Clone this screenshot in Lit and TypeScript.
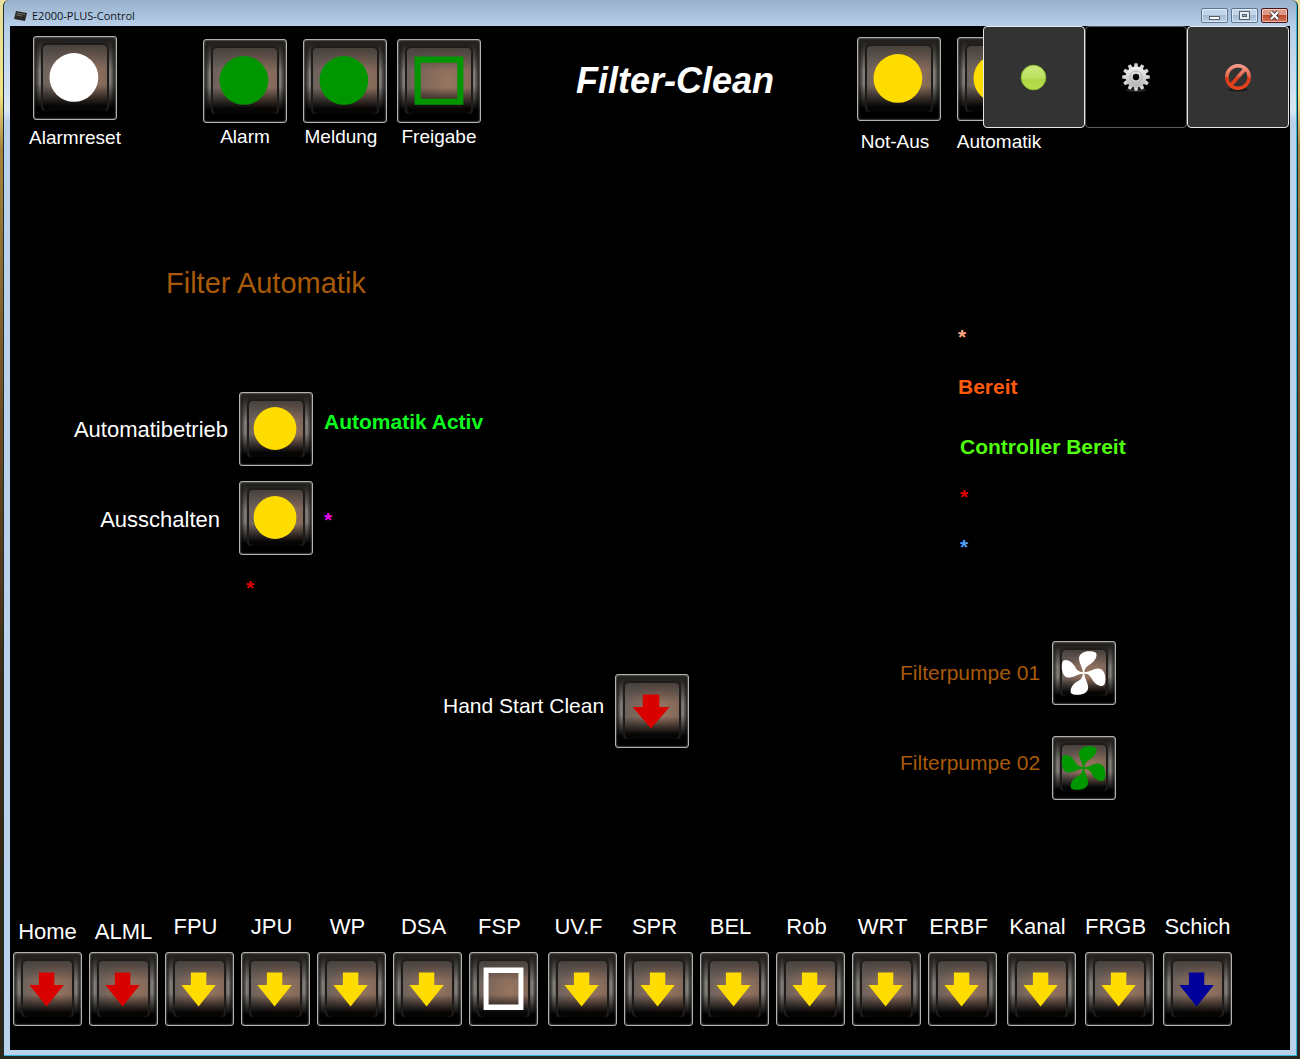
import { LitElement, html, css, svg } from "lit";
import { customElement, property } from "lit/decorators.js";

type Glyph = "circle" | "square" | "arrow" | "fan";
type Tone = "white" | "green" | "yellow" | "red" | "blue";

interface TileSpec {
  id: string;
  label: string;
  glyph: Glyph;
  tone: Tone;
}

const BLADE =
  "M-1 -1C-1 -6 -5 -11 -5.500 -17C-5.500 -23 0 -26 7 -26C12 -26 15.500 -25 15.500 -22C15.500 -17 12 -13 8 -10.500C3 -8 1 -5 1 -1Z";

const glyphs = {
  circle: svg`<circle cx="36" cy="36.5" r="22" />`,
  square: svg`<path fill-rule="evenodd" d="M15 15H59V58.500H15ZM20.500 20.500V53H53.500V20.500Z" />`,
  arrow: svg`<path d="M27.500 20H44.500V33H55L36 55L17 33H27.500Z" />`,
  fan: svg`<g transform="translate(36.500 37)">
    ${[0, 90, 180, 270].map((a) => svg`<path d=${BLADE} transform="rotate(${a})" />`)}
    <circle r="1.500" />
  </g>`,
};

/** Face of a bevelled push button with a coloured glyph. */
@customElement("tile-face")
class TileFace extends LitElement {
  @property() glyph: Glyph = "circle";
  @property() tone: Tone = "white";

  static styles = css`
    :host {
      display: block;
      height: 100%;
    }
    .face {
      box-sizing: border-box;
      height: 100%;
      padding: 6px 7px;
      border: 1px solid #b4b2ad;
      border-radius: 3px;
      display: grid;
      position: relative;
      box-shadow: inset 0 0 2px #b4b2ad;
      background:
        linear-gradient(to bottom, #23211f 4%, rgba(24, 22, 20, 0.8) 9%, transparent 40%, transparent 56%, #000 86%),
        linear-gradient(to right, #2e2c2a 2%, #85817b 7%, #5d5955 12%, #5d5955 88%, #85817b 93%, #2e2c2a 98%);
    }
    .plate {
      border: 2px solid #1f1c1a;
      border-bottom-color: transparent;
      border-radius: 6px;
      background:
        linear-gradient(to bottom, rgba(44, 41, 38, 0.6), transparent 34%, transparent 60%, rgba(0, 0, 0, 0.95) 92%),
        radial-gradient(circle at 64% 52%, #98765f, #84695a 40%, #6e635d 74%, #6b6662);
      background-clip: padding-box;
    }
    svg {
      position: absolute;
      inset: 0;
      width: 100%;
      height: 100%;
    }
    .white { fill: #ffffff; }
    .green { fill: #009600; }
    .yellow { fill: #ffdc00; }
    .red { fill: #d90000; }
    .blue { fill: #00009b; }
  `;

  render() {
    return html`<div class="face">
      <div class="plate"></div>
      <svg class=${this.tone} viewBox="0 0 74 74" preserveAspectRatio="none" aria-hidden="true">
        ${glyphs[this.glyph]}
      </svg>
    </div>`;
  }
}

const NAV: TileSpec[][] = [
  [
    { id: "home", label: "Home", glyph: "arrow", tone: "red" },
    { id: "alml", label: "ALML", glyph: "arrow", tone: "red" },
    { id: "fpu", label: "FPU", glyph: "arrow", tone: "yellow" },
    { id: "jpu", label: "JPU", glyph: "arrow", tone: "yellow" },
    { id: "wp", label: "WP", glyph: "arrow", tone: "yellow" },
    { id: "dsa", label: "DSA", glyph: "arrow", tone: "yellow" },
    { id: "fsp", label: "FSP", glyph: "square", tone: "white" },
  ],
  [
    { id: "uvf", label: "UV.F", glyph: "arrow", tone: "yellow" },
    { id: "spr", label: "SPR", glyph: "arrow", tone: "yellow" },
    { id: "bel", label: "BEL", glyph: "arrow", tone: "yellow" },
    { id: "rob", label: "Rob", glyph: "arrow", tone: "yellow" },
    { id: "wrt", label: "WRT", glyph: "arrow", tone: "yellow" },
    { id: "erbf", label: "ERBF", glyph: "arrow", tone: "yellow" },
  ],
  [
    { id: "kanal", label: "Kanal", glyph: "arrow", tone: "yellow" },
    { id: "frgb", label: "FRGB", glyph: "arrow", tone: "yellow" },
    { id: "schich", label: "Schich", glyph: "arrow", tone: "blue" },
  ],
];

@customElement("app-root")
class AppRoot extends LitElement {
  static styles = css`
    :host {
      display: block;
      font-family: "Liberation Sans", Arial, sans-serif;
      color: #fff;
    }
    * { box-sizing: border-box; }
    h1, h2, p { margin: 0; font-weight: normal; }
    button {
      display: block;
      margin: 0;
      padding: 0;
      border: 0;
      background: none;
      color: inherit;
      font: inherit;
      cursor: pointer;
    }
    label, p { white-space: nowrap; }

    .desktop {
      min-height: 100vh;
      display: flex;
      padding: 0 2px 2px 3px;
      background: linear-gradient(to bottom, #e8dfa0, #f3e283 9%, #a8843c 14%, #6b4a20 40%, #3d2a14 65%, #2c2416);
    }
    .window {
      flex: 1;
      display: flex;
      flex-direction: column;
      padding: 0 7px 6px 6px;
      border: 1px solid #1d2b33;
      border-top: 0;
      border-radius: 6px 6px 0 0;
      box-shadow: inset -1px -1px 0 #35b5d4;
      background: linear-gradient(to bottom, #98b1cc, #b7cfe9 26px, #dbe7f3 110px, #b9d1ea 122px);
    }

    .titlebar {
      height: 26px;
      display: flex;
      align-items: center;
      gap: 5px;
      padding: 5px 2px 0 4px;
      font: 11px/16px "Open Sans", "Noto Sans", sans-serif;
      color: #10141a;
    }
    .app-icon { width: 13px; height: 12px; }
    .caption { flex: 1; }
    .win-buttons { display: flex; gap: 3px; }
    .win-button {
      width: 27px;
      height: 15px;
      border: 1px solid #5f7690;
      border-radius: 2px;
      background: linear-gradient(to bottom, #c3d5e8 45%, #a3bbd4 50%, #bcd2e8);
      box-shadow: inset 0 0 0 1px rgba(255, 255, 255, 0.5);
    }
    .win-button.close {
      border-color: #4c1512;
      background: linear-gradient(to bottom, #dd9a88 45%, #bf4a30 50%, #d4745a);
    }
    .win-button svg { display: block; width: 25px; height: 13px; }

    .screen {
      flex: 1;
      display: flex;
      flex-direction: column;
      position: relative;
      background: #000;
    }

    .tile { display: block; flex: none; width: 84px; height: 84px; }
    .tile.medium { width: 74px; height: 74px; }
    .tile.small { width: 64px; height: 64px; }
    .tile.narrow { width: 69px; height: 74px; }

    .header {
      display: flex;
      align-items: flex-start;
      padding: 10px 249px 0 23px;
      font-size: 19px;
      line-height: 24px;
    }
    .item {
      width: 84px;
      display: flex;
      flex-direction: column;
      align-items: center;
      gap: 6px;
    }
    .lamps {
      display: flex;
      gap: 10px;
      padding-top: 3px;
      margin-left: 86px;
    }
    .lamps .item { gap: 2px; }
    .pair { display: flex; gap: 16px; }
    .modes { padding-top: 1px; }
    .modes .item { gap: 9px; }
    .title {
      flex: 1;
      padding: 25px 0 0 12px;
      text-align: center;
      font: italic bold 36px/40px "Liberation Sans", Arial, sans-serif;
      white-space: nowrap;
    }

    .toolbar {
      position: absolute;
      top: 0;
      right: 1px;
      display: flex;
    }
    .tool {
      width: 102px;
      height: 102px;
      display: grid;
      place-items: center;
      border: 1px solid #e6e6e6;
      border-radius: 4px;
      background: #333;
    }
    .tool.active { border-color: #5c5c5c; background: #000; }
    .tool svg { width: 32px; height: 32px; }

    .main {
      flex: 1;
      display: grid;
      grid-template-columns: minmax(0, 433fr) minmax(0, 448fr) minmax(0, 399fr);
      font-size: 21px;
      line-height: 24px;
    }
    .heading {
      padding: 113px 0 0 156px;
      font-size: 29px;
      line-height: 32px;
      color: #a85a08;
      white-space: nowrap;
    }
    .controls { display: flex; gap: 11px; padding-top: 93px; }
    .names {
      flex: none;
      width: 218px;
      display: flex;
      flex-direction: column;
      align-items: flex-end;
      gap: 66px;
      padding-top: 26px;
      font-size: 22px;
    }
    .indent { padding-right: 8px; }
    .switches { display: flex; flex-direction: column; gap: 15px; }
    .states {
      display: flex;
      flex-direction: column;
      gap: 74px;
      padding-top: 18px;
    }
    .note { padding: 6px 0 0 7px; }

    .status { font-weight: bold; }
    .lime { color: #0cff1c; }
    .magenta { color: #f000f0; }
    .crimson { color: #e00000; }
    .peach { color: #ffa880; }
    .orange { color: #ff5a0c; }
    .leaf { color: #50ff0c; }
    .sky { color: #50a0ff; }

    .hand {
      display: flex;
      align-items: flex-start;
      gap: 11px;
      padding-top: 520px;
    }
    .hand label { padding-top: 20px; }

    .messages {
      display: flex;
      flex-direction: column;
      gap: 36px;
      padding: 171px 0 0 67px;
    }
    .group { display: flex; flex-direction: column; gap: 26px; }
    .group.wide { padding-left: 2px; }
    .pumps {
      display: flex;
      gap: 12px;
      padding: 82px 0 0 9px;
      color: #a85a08;
    }
    .pump-names { display: flex; flex-direction: column; gap: 66px; padding-top: 20px; }
    .pump-tiles { display: flex; flex-direction: column; gap: 31px; }

    .nav {
      display: flex;
      gap: 10px;
      padding: 0 0 24px 3px;
      font-size: 22px;
      line-height: 24px;
    }
    .nav-group { display: flex; align-items: flex-end; gap: 7px; }
    .nav-group:last-child { gap: 9px; }
    .nav-item {
      width: 69px;
      display: flex;
      flex-direction: column;
      align-items: center;
      gap: 13px;
    }
    .nav-item label { padding-right: 8px; }
    .nav-item.red { gap: 8px; }
    .nav-item.red label, .nav-item.blue label { padding-right: 0; }
  `;

  private tile(id: string, glyph: Glyph, tone: Tone, size = "") {
    return html`<button class="tile ${size}" id=${id} type="button">
      <tile-face .glyph=${glyph} .tone=${tone}></tile-face>
    </button>`;
  }

  private item(id: string, label: string, glyph: Glyph, tone: Tone, labelClass = "") {
    return html`<div class="item">
      ${this.tile(id, glyph, tone)}
      <label class=${labelClass} for=${id}>${label}</label>
    </div>`;
  }

  private titlebar() {
    return html`<div class="titlebar">
      <svg class="app-icon" viewBox="0 0 13 12" aria-hidden="true">
        <path d="M2 1L13 3L11 11L0 9Z" fill="#2b2927" />
        <path d="M3 3L11 4.500M2.500 5L8 6" stroke="#77736c" />
      </svg>
      <span class="caption">E2000-PLUS-Control</span>
      <div class="win-buttons">
        <button class="win-button" type="button" aria-label="Minimieren">
          <svg viewBox="0 0 25 13"><rect x="7.500" y="7.500" width="10" height="3" fill="#fff" stroke="#53606f" /></svg>
        </button>
        <button class="win-button" type="button" aria-label="Maximieren">
          <svg viewBox="0 0 25 13">
            <rect x="7.500" y="2.500" width="10" height="8" fill="#e8eef5" stroke="#53606f" />
            <rect x="10.500" y="5.500" width="4" height="2" fill="#9db4cd" stroke="#53606f" />
          </svg>
        </button>
        <button class="win-button close" type="button" aria-label="Schließen">
          <svg viewBox="0 0 25 13">
            <path d="M9 3L16 10M16 3L9 10" stroke="#4a3a42" stroke-width="4" />
            <path d="M9 3L16 10M16 3L9 10" stroke="#fff" stroke-width="2.200" />
          </svg>
        </button>
      </div>
    </div>`;
  }

  private toolbar() {
    const teeth = Array.from({ length: 12 }, (_, i) => i * 30);
    return html`<div class="toolbar">
      <button class="tool" type="button" aria-label="Verbindung">
        <svg viewBox="0 0 32 32">
          <defs>
            <linearGradient id="lamp" x1="0" y1="0" x2="0" y2="1">
              <stop offset="0" stop-color="#c9ea7c" />
              <stop offset="0.500" stop-color="#bfe162" />
              <stop offset="0.600" stop-color="#afd746" />
              <stop offset="1" stop-color="#b9e04e" />
            </linearGradient>
          </defs>
          <circle cx="15.500" cy="16.500" r="12.300" fill="url(#lamp)" stroke="#8fbd30" />
        </svg>
      </button>
      <button class="tool active" type="button" aria-label="Einstellungen">
        <svg viewBox="0 0 32 32">
          <defs>
            <linearGradient id="steel" x1="0" y1="0" x2="0" y2="1">
              <stop offset="0" stop-color="#f2f2f2" />
              <stop offset="1" stop-color="#b4b4b4" />
            </linearGradient>
          </defs>
          <ellipse cx="16" cy="29" rx="10" ry="2" fill="#222" />
          <g fill="#d6d6d6">
            ${teeth.map((a) => svg`<path d="M13.800 7L14.500 2.200H17.500L18.200 7Z" transform="rotate(${a} 16 16)" />`)}
          </g>
          <path fill="url(#steel)" fill-rule="evenodd" d="M16 5.500a10.500 10.500 0 1 0 0 21a10.500 10.500 0 1 0 0-21ZM16 12.800a3.200 3.200 0 1 1 0 6.400a3.200 3.200 0 1 1 0-6.400Z" />
          <circle cx="16" cy="16" r="6" fill="none" stroke="#b0b0b0" stroke-width="1" />
        </svg>
      </button>
      <button class="tool" type="button" aria-label="Sperren">
        <svg viewBox="0 0 32 32">
          <defs>
            <linearGradient id="ban" gradientUnits="userSpaceOnUse" x1="0" y1="3" x2="0" y2="29">
              <stop offset="0" stop-color="#f5a18f" />
              <stop offset="0.450" stop-color="#ea6a4e" />
              <stop offset="0.550" stop-color="#dc3a18" />
              <stop offset="1" stop-color="#e84420" />
            </linearGradient>
          </defs>
          <ellipse cx="16" cy="28.500" rx="10" ry="2" fill="#1c1c1c" />
          <g fill="none" stroke="url(#ban)" stroke-width="3.500">
            <circle cx="16" cy="16" r="11.200" />
            <path d="M9 24L23 8" />
          </g>
        </svg>
      </button>
    </div>`;
  }

  render() {
    return html`<div class="desktop">
      <div class="window">
        ${this.titlebar()}
        <div class="screen">
          <header class="header">
            ${this.item("reset", "Alarmreset", "circle", "white")}
            <div class="lamps">
              <div class="pair">
                ${this.item("alarm", "Alarm", "circle", "green")}
                ${this.item("meldung", "Meldung", "circle", "green", "indent")}
              </div>
              ${this.item("freigabe", "Freigabe", "square", "green")}
            </div>
            <h1 class="title">Filter-Clean</h1>
            <div class="pair modes">
              ${this.item("notaus", "Not-Aus", "circle", "yellow", "indent")}
              ${this.item("automatik", "Automatik", "circle", "yellow")}
            </div>
          </header>
          ${this.toolbar()}

          <main class="main">
            <section>
              <h2 class="heading">Filter Automatik</h2>
              <div class="controls">
                <div class="names">
                  <label for="auto-on">Automatibetrieb</label>
                  <label class="indent" for="auto-off">Ausschalten</label>
                </div>
                <div class="switches">
                  ${this.tile("auto-on", "circle", "yellow", "medium")}
                  ${this.tile("auto-off", "circle", "yellow", "medium")}
                  <p class="status crimson note">*</p>
                </div>
                <div class="states">
                  <p class="status lime">Automatik Activ</p>
                  <p class="status magenta">*</p>
                </div>
              </div>
            </section>

            <section class="hand">
              <label for="hand-start">Hand Start Clean</label>
              ${this.tile("hand-start", "arrow", "red", "medium")}
            </section>

            <section>
              <div class="messages">
                <div class="group">
                  <p class="status peach">*</p>
                  <p class="status orange">Bereit</p>
                </div>
                <div class="group wide">
                  <p class="status leaf">Controller Bereit</p>
                  <p class="status crimson">*</p>
                  <p class="status sky">*</p>
                </div>
              </div>
              <div class="pumps">
                <div class="pump-names">
                  <label for="pump-1">Filterpumpe 01</label>
                  <label for="pump-2">Filterpumpe 02</label>
                </div>
                <div class="pump-tiles">
                  ${this.tile("pump-1", "fan", "white", "small")}
                  ${this.tile("pump-2", "fan", "green", "small")}
                </div>
              </div>
            </section>
          </main>

          <nav class="nav">
            ${NAV.map(
              (group) => html`<div class="nav-group">
                ${group.map(
                  (n) => html`<div class="nav-item ${n.tone}">
                    <label for=${n.id}>${n.label}</label>
                    ${this.tile(n.id, n.glyph, n.tone, "narrow")}
                  </div>`
                )}
              </div>`
            )}
          </nav>
        </div>
      </div>
    </div>`;
  }
}
